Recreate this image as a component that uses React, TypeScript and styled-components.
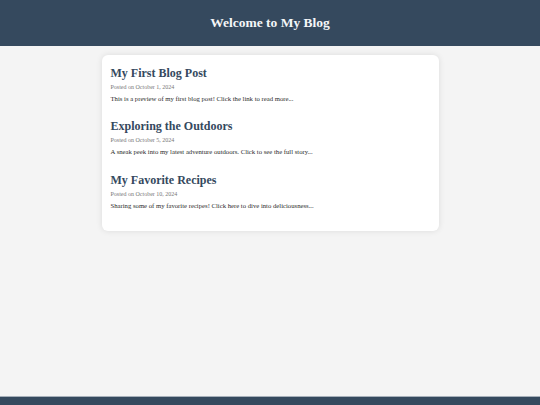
import React from "react";
import styled, { createGlobalStyle } from "styled-components";

interface Post {
  title: string;
  date: string;
  preview: string;
}

const posts: Post[] = [
  {
    title: "My First Blog Post",
    date: "Posted on October 1, 2024",
    preview: "This is a preview of my first blog post! Click the link to read more...",
  },
  {
    title: "Exploring the Outdoors",
    date: "Posted on October 5, 2024",
    preview: "A sneak peek into my latest adventure outdoors. Click to see the full story...",
  },
  {
    title: "My Favorite Recipes",
    date: "Posted on October 10, 2024",
    preview: "Sharing some of my favorite recipes! Click here to dive into deliciousness...",
  },
];

const GlobalStyle = createGlobalStyle`
  html, body {
    margin: 0;
    padding: 0;
    height: 100%;
    background: #f4f4f4;
    font-family: "Liberation Serif", "Times New Roman", serif;
  }
  #root {
    min-height: 100%;
  }
`;

const App: React.FC = () => {
  return (
    <>
      <GlobalStyle />
      <Page>
        <Header>
          <Title>Welcome to My Blog</Title>
        </Header>
        <Main>
          <Card>
            {posts.map((post) => (
              <PostItem key={post.title}>
                <PostTitle>{post.title}</PostTitle>
                <PostDate>{post.date}</PostDate>
                <PostPreview>{post.preview}</PostPreview>
              </PostItem>
            ))}
          </Card>
        </Main>
        <Footer />
      </Page>
    </>
  );
};

const Page = styled.div`
  display: flex;
  flex-direction: column;
  height: 405px;
`;

const Header = styled.header`
  background: #35495e;
  height: 46px;
  display: flex;
  align-items: center;
  justify-content: center;
`;

const Title = styled.h1`
  margin: 0 0 1px;
  font-size: 13.5px;
  font-weight: bold;
  color: #f4f6f8;
`;

const Main = styled.main`
  flex: 1;
  display: flex;
  justify-content: center;
  align-items: flex-start;
  padding-top: 9px;
`;

const Card = styled.div`
  width: 337px;
  box-sizing: border-box;
  background: #ffffff;
  border-radius: 6px;
  box-shadow: 0 0 6px rgba(0, 0, 0, 0.1);
  padding: 11px 9px 21px;
  display: flex;
  flex-direction: column;
  gap: 16.5px;
`;

const PostItem = styled.article`
  display: flex;
  flex-direction: column;
`;

const PostTitle = styled.h2`
  margin: 0 0 3.5px;
  font-size: 12px;
  line-height: 14.4px;
  font-weight: bold;
  color: #35495e;
`;

const PostDate = styled.span`
  font-size: 6px;
  line-height: 7px;
  color: #777777;
  margin-bottom: 3px;
`;

const PostPreview = styled.p`
  margin: 0;
  font-size: 6.7px;
  line-height: 9px;
  color: #2b2b2b;
`;

const Footer = styled.footer`
  background: #35495e;
  height: 8px;
  border-top: 1px solid #a7b0ba;
`;

export default App;
